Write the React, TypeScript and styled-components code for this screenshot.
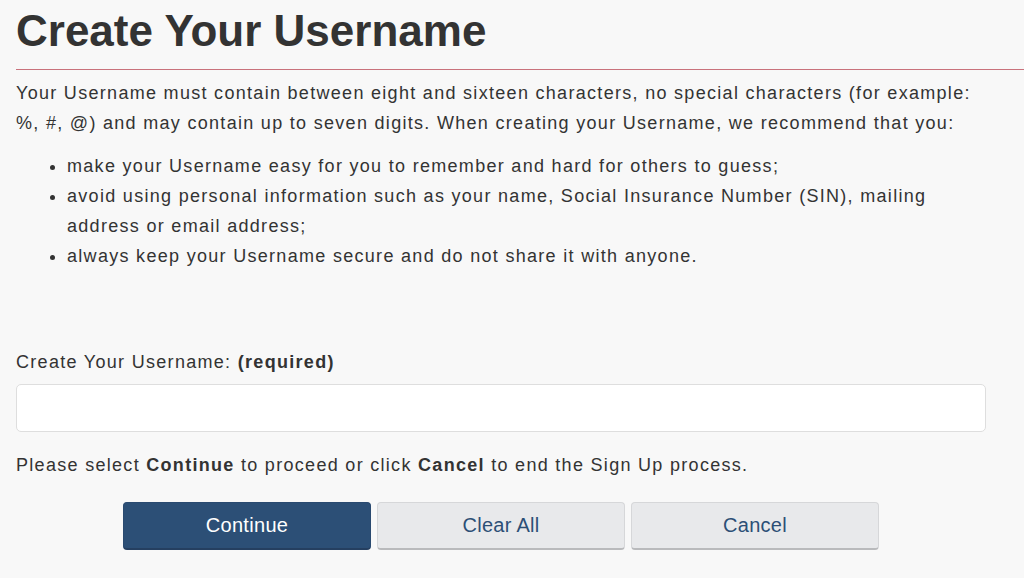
import React from "react";
import styled, { createGlobalStyle } from "styled-components";

const Global = createGlobalStyle`
  html, body { margin: 0; padding: 0; background: #f8f8f8; }
  body { font-family: "Liberation Sans", Arial, sans-serif; color: #333; overflow: hidden; }
`;

const Page = styled.div`
  width: 1024px;
  height: 578px;
  padding: 0 38px 0 16px;
  box-sizing: border-box;
  display: flex;
  flex-direction: column;
`;

const Title = styled.h1`
  margin: 0 -38px 0 0;
  padding: 6px 0 13px;
  font-size: 44px;
  font-weight: 700;
  line-height: 50px;
  color: #333;
  border-bottom: 1px solid #c9727c;
`;

const Para = styled.p`
  margin: 8px 0 0;
  font-size: 18px;
  line-height: 30px;
  letter-spacing: 1.3px;
`;

const List = styled.ul`
  margin: 13px 0 0;
  padding-left: 51px;
  font-size: 18px;
  line-height: 30px;
  letter-spacing: 1.3px;
`;

const Label = styled.label`
  display: block;
  margin-top: 76px;
  font-size: 18px;
  line-height: 30px;
  letter-spacing: 1.3px;
`;

const Input = styled.input`
  margin-top: 7px;
  height: 48px;
  width: 100%;
  box-sizing: border-box;
  border: 1px solid #dedede;
  border-radius: 5px;
  background: #fff;
  font-size: 18px;
  padding: 0 12px;
`;

const Note = styled.p`
  margin: 18px 0 0;
  font-size: 18px;
  line-height: 30px;
  letter-spacing: 1.3px;
`;

const Buttons = styled.div`
  display: flex;
  justify-content: center;
  gap: 6px;
  margin-top: 22px;
`;

const Button = styled.button<{ $primary?: boolean }>`
  width: 248px;
  height: 48px;
  border-radius: 4px;
  font-family: "Liberation Sans", Arial, sans-serif;
  font-size: 20px;
  letter-spacing: 0.3px;
  cursor: pointer;
  background: ${(p) => (p.$primary ? "#2c4f76" : "#e8e9eb")};
  color: ${(p) => (p.$primary ? "#fff" : "#2c4f76")};
  border: 1px solid ${(p) => (p.$primary ? "#2a4a70" : "#d6d7d9")};
  border-bottom: 2px solid ${(p) => (p.$primary ? "#253f60" : "#b9babc")};
  padding: 0;
`;

export default function App() {
  return (
    <Page>
      <Global />
      <Title>Create Your Username</Title>
      <Para>
        Your Username must contain between eight and sixteen characters, no special characters (for example:
        %, #, @) and may contain up to seven digits. When creating your Username, we recommend that you:
      </Para>
      <List>
        <li>make your Username easy for you to remember and hard for others to guess;</li>
        <li>
          avoid using personal information such as your name, Social Insurance Number (SIN), mailing
          address or email address;
        </li>
        <li>always keep your Username secure and do not share it with anyone.</li>
      </List>
      <Label htmlFor="username">
        Create Your Username: <b>(required)</b>
      </Label>
      <Input id="username" type="text" />
      <Note>
        Please select <b>Continue</b> to proceed or click <b>Cancel</b> to end the Sign Up process.
      </Note>
      <Buttons>
        <Button $primary>Continue</Button>
        <Button>Clear All</Button>
        <Button>Cancel</Button>
      </Buttons>
    </Page>
  );
}
